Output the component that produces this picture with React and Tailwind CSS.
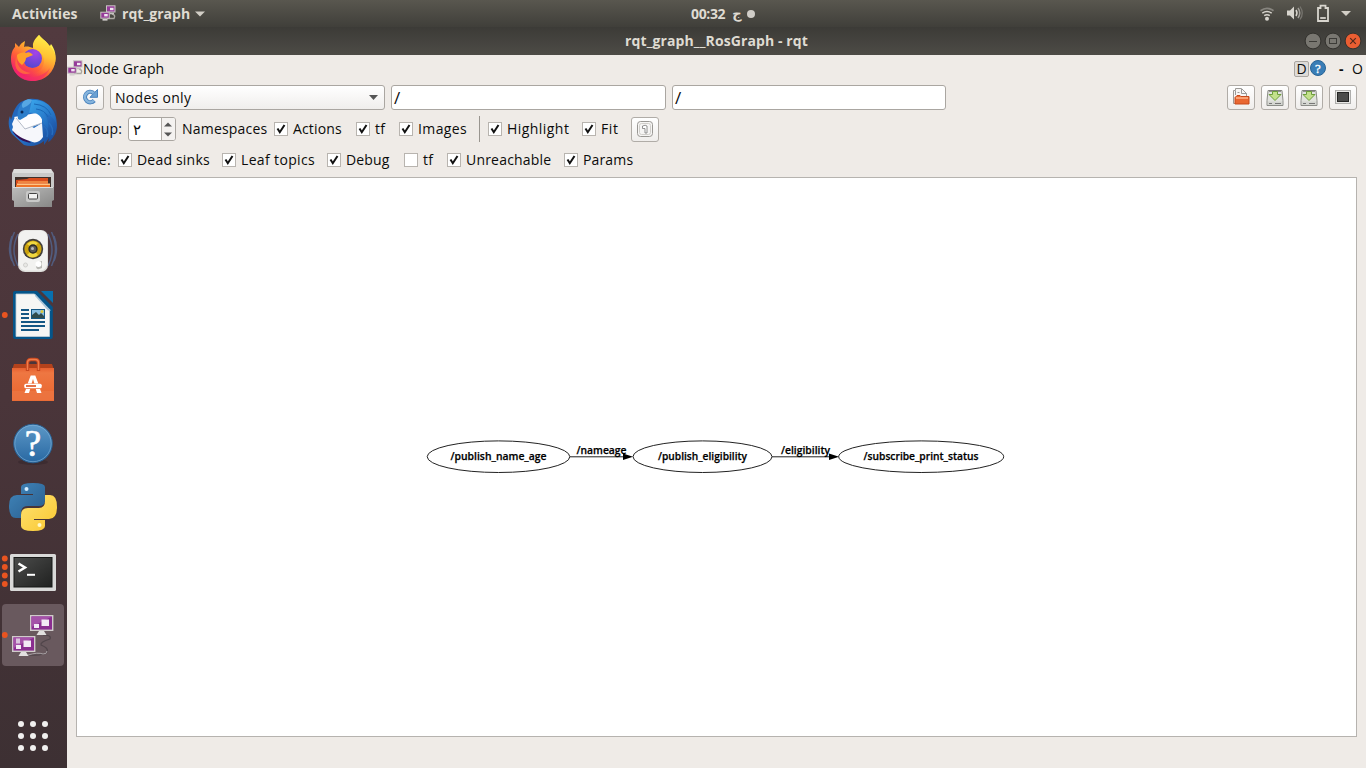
import React from "react";

const clean = "whitespace-nowrap leading-none";

function Monitor({ x, y, extra }) {
  return (
    <g transform={`translate(${x} ${y})`}>
      <path d="M9 16h5l2.500 4h-10z" fill="#e2e0df" />
      <rect x="0.7" y="0.7" width="22" height="14.600" fill="#8a2e90" stroke="#cfcbca" strokeWidth="1.400" />
      <path d="M1.500 1.500h20.400L1.500 12z" fill="#a452a8" />
      <rect x="4" y="9" width="5" height="4" fill="#f2e9f4" />
      <rect x="11.500" y="4.500" width="7.500" height="6.500" fill="#f2e9f4" />
      {extra && <rect x="4" y="2.500" width="4" height="5" fill="#d9c3dc" />}
    </g>
  );
}

function TinyRqt({ className }) {
  return (
    <svg width="16" height="16" viewBox="0 0 16 16" className={className}>
      <path d="M12 9q4 1 2 4.500H7" fill="none" stroke="#aaa69f" strokeWidth="1.400" />
      <rect x="6.500" y="0.8" width="8.500" height="6.200" fill="#963b99" stroke="#c9c5c4" />
      <rect x="10" y="2.800" width="3.500" height="2.400" fill="#f1e6f2" />
      <path d="M10 8.500h4" stroke="#c5c2c0" strokeWidth="1.600" />
      <rect x="0.8" y="7.200" width="8.500" height="6" fill="#963b99" stroke="#c9c5c4" />
      <rect x="4.200" y="9" width="3.500" height="2.400" fill="#f1e6f2" />
      <path d="M2.500 14.800h5" stroke="#d4d1cf" strokeWidth="1.600" />
    </svg>
  );
}

function TopBar() {
  return (
    <header className="grid h-[27px] shrink-0 grid-cols-[100px_591px_1fr_112px] items-center bg-linear-to-b from-[#59574f] to-[#403f3a] text-[14px] font-bold text-[#dfdbd2]">
      <span className={`${clean} pl-3 tracking-[0.05px]`}>Activities</span>
      <span className="flex items-center">
        <TinyRqt className="mt-[-2px]" />
        <span className={`${clean} ml-[6px] tracking-[0.05px]`}>rqt_graph</span>
        <svg width="10" height="6" className="ml-[5px]"><path d="M0 .5h10L5 5.5z" fill="#d2cec6" /></svg>
      </span>
      <span className="flex items-center">
        <span className={`${clean} tracking-[-0.35px]`}>00:32</span>
        <span className={`${clean} ml-[7px] text-[13px]`}>ج</span>
        <span className="ml-[5px] h-2 w-2 rounded-full bg-[#d0cdc8]" />
      </span>
      <span className="flex items-center">
        <svg width="106" height="22" viewBox="0 0 106 22" className="mt-[-1px]">
          <g fill="none" strokeLinecap="butt">
            <path d="M6.5 8.8q6.5-4.8 13 0" stroke="#87857f" strokeWidth="1.7" />
            <path d="M8.3 11.2q4.7-3.2 9.4 0" stroke="#d8d5ce" strokeWidth="1.5" />
            <path d="M10.2 13.7q2.8-1.8 5.6 0" stroke="#d8d5ce" strokeWidth="1.5" />
            <circle cx="13" cy="16.8" r="2" fill="#d8d5ce" />
            <path d="M33 8.500h3l4-4v13l-4-4h-3z" fill="#d8d5ce" />
            <path d="M42 8q2 3 0 6" stroke="#d8d5ce" strokeWidth="1.5" />
            <path d="M44 6q3.5 5 0 10" stroke="#a19e98" strokeWidth="1.5" />
            <path d="M46 4.5q4.5 6.500 0 13" stroke="#77756f" strokeWidth="1.3" />
            <path d="M64 6h2.500v-2.300h5v2.300h2.500v13h-10z" stroke="#d8d5ce" strokeWidth="1.8" />
            <path d="M66.200 16h5.600" stroke="#d8d5ce" strokeWidth="1.800" />
          </g>
          <path d="M87 9h10l-5 5z" fill="#d2cec6" />
        </svg>
      </span>
    </header>
  );
}

function DockItem({ children, dots = 0, active }) {
  return (
    <div className="h-16 w-[67px] shrink-0">
      <svg width="67" height="64" viewBox="0 0 67 64">
        {active && <rect x="2" y="1" width="62" height="62" rx="4" fill="#69595e" />}
        {dots === 1 && <circle cx="4.800" cy="32" r="2.900" fill="#e95420" />}
        {dots === 4 && [19.500, 28, 36.500, 45].map((y) => <circle key={y} cx="4.800" cy={y} r="2.900" fill="#e95420" />)}
        {children}
      </svg>
    </div>
  );
}

function Firefox() {
  return (
    <DockItem>
      <defs>
        <linearGradient id="ff" x1="0.8" y1="0.1" x2="0.25" y2="0.95">
          <stop offset="0.1" stopColor="#fff44f" /><stop offset="0.35" stopColor="#ffac2c" />
          <stop offset="0.65" stopColor="#ff5c3a" /><stop offset="1" stopColor="#ee1379" />
        </linearGradient>
        <linearGradient id="fy" x1="0.6" y1="0" x2="0.4" y2="1">
          <stop offset="0" stopColor="#fff04a" /><stop offset="0.5" stopColor="#ffc233" /><stop offset="1" stopColor="#ff7139" stopOpacity="0" />
        </linearGradient>
        <radialGradient id="ffg" cx="0.65" cy="0.2" r="0.8">
          <stop offset="0" stopColor="#a543e8" /><stop offset="1" stopColor="#5548cf" />
        </radialGradient>
      </defs>
      <path d="M39 8c2 3 6 5 9 9l1 4 2-4c3 4 5 9 4.500 15C55 45 45 54 33 54S11 45 11 32c0-6 2-10 4-12l0-4 4 4c1-3 4-5 6-6l-1 6c3-1 6 0 9 1 0-5 3-9 6-13z" fill="url(#ff)" />
      <path d="M39 8c-6 5-8 11-4 15 8 3 11 9 8 16-3 7-10 8-15 6 7 5 16 5 22-1 8-8 7-18 0-25C45 13 41 11 39 8z" fill="url(#fy)" />
      <circle cx="32.500" cy="31.500" r="9.500" fill="url(#ffg)" />
      <path d="M17 28c2-2 6-3 9-2 3-2 6 1 7 2-2 1-5 2-7 3 0 3-2 5-4 7-4-3-5-6-5-10z" fill="#ffa129" />
      <path d="M17 28c-2 9 4 17 14 18-13 4-19-6-14-18z" fill="#ff7139" opacity=".8" />
      <path d="M12 37c4 15 28 18 38 4-4 9-10 13-18 13-11 0-18-7-20-17z" fill="#f42f68" opacity=".6" />
    </DockItem>
  );
}

function Thunderbird() {
  return (
    <DockItem>
      <defs>
        <linearGradient id="tb" x1="0" y1="0" x2="1" y2="1"><stop stopColor="#1f5cb0" /><stop offset=".5" stopColor="#2878ce" /><stop offset="1" stopColor="#17418d" /></linearGradient>
        <linearGradient id="tw" x1="0" y1="0" x2="1" y2="1"><stop stopColor="#3aa6ec" /><stop offset="1" stopColor="#1c5db3" /></linearGradient>
      </defs>
      <path d="M29 8C45 6 57 18 57 34c0 7-3 12-7 16l-2 1 1-4-5 7 0-4c-6 5-13 6-20 4L12 43C8 37 8 29 10 25l1 4C13 20 17 12 23 10z" fill="url(#tb)" />
      <path d="M13 41l3 4c4 4 9 6 15 7-4-5-11-10-18-14z" fill="#341052" />
      <path d="M15 26l19 11 8-5 1 14c-3 5-8 7-13 4-7-2-13-5-18-11l1-3-1-3z" fill="#f6f7fb" />
      <path d="M14 26l28-5 0 11-17 6z" fill="#fdfdff" />
      <path d="M16 27l9 11 17-6" fill="none" stroke="#b4bbc8" strokeWidth="1" />
      <path d="M18 28c-2-10 3-18 11-20 7 1 6 4 4 8-1 3-4 5-6 9l-7 4z" fill="#2d7ecb" />
      <path d="M24 10c3-2 6-2 8-1-1 4-5 6-9 8-2-2-1-5 1-7z" fill="#69b9ed" opacity=".7" />
      <circle cx="22" cy="21" r="1.500" fill="#0b2856" />
      <path d="M32 9c14-1 24 9 24 23-3-6-7-9-12-10 3 4 5 10 4 16l-5-6c-1-6-5-11-14-10z" fill="url(#tw)" />
      <path d="M34 13q13 1 17 11M36 18q9 1 12 8" fill="none" stroke="#1967b6" strokeWidth="1" />
      <path d="M44 35q5 4 3 11M49 32q5 5 3 12" fill="none" stroke="#276dbe" strokeWidth="1.500" />
    </DockItem>
  );
}

function Files() {
  return (
    <DockItem>
      <defs><linearGradient id="fi" x1="0" y1="0" x2="1" y2="1"><stop stopColor="#bdbdbc" /><stop offset="1" stopColor="#878786" /></linearGradient></defs>
      <g transform="translate(0 4)">
        <path d="M14 10h37l3 4v27H12V14z" fill="#c9c9c8" />
        <path d="M14 10h37l2 4H13z" fill="#dededd" />
        <rect x="15" y="18" width="36" height="12" fill="#3e302b" />
        <path d="M16 21l11-1 2-1h19v9H16z" fill="#d84d1e" />
        <path d="M18 22h30v2H18z" fill="#ef8440" />
        <path d="M17 24.500h33v3H17z" fill="#ffc481" />
        <path d="M16 26h34v3H16z" fill="#ef7428" />
        <path d="M12 28h42v13l-2 1v6H14v-6l-2-1z" fill="url(#fi)" />
        <path d="M13 28.500h40" stroke="#ddd" />
        <rect x="26" y="32" width="14" height="11" rx="2" fill="#c9c9c8" />
        <rect x="28.500" y="34.500" width="9" height="5.500" rx="1" fill="#f2f2f1" stroke="#444" />
      </g>
    </DockItem>
  );
}

function Rhythmbox() {
  return (
    <DockItem>
      <g fill="none" stroke="#52658f" strokeWidth="1.500" opacity=".8">
        <path d="M18 15q-8 16 0 32M14.500 13q-8 17 0 34M12 17q-5 13 0 25M48 15q8 16 0 32M51.500 13q8 17 0 34M54 17q5 13 0 25" />
      </g>
      <rect x="18" y="11" width="30" height="42" rx="7" fill="#dededb" />
      <rect x="19" y="11.500" width="28" height="40" rx="6.500" fill="#f2f2f0" />
      <circle cx="33" cy="30" r="10.200" fill="#423f3b" />
      <circle cx="33" cy="30" r="8.600" fill="#cba20d" />
      <path d="M27 25q5-5 11-1l-5 5zM27 36q5 5 11 0l-5-6z" fill="#f0d740" />
      <circle cx="33" cy="30" r="4" fill="#5b5a57" stroke="#282724" strokeWidth="1.300" />
      <circle cx="32.500" cy="29.500" r="1.500" fill="#bbb" />
      <path d="M36 43l6-1v7q-6 3-6-2z" fill="#b9b9b5" /><circle cx="38.500" cy="45" r="3" fill="#fff" />
      <circle cx="25.500" cy="46" r="2" fill="#e8e8e5" stroke="#d0d0cd" />
    </DockItem>
  );
}

function Writer() {
  return (
    <DockItem dots={1}>
      <path d="M15 8h22l15.800 16v30q0 2-2 2H15q-2 0-2-2V10q0-2 2-2z" fill="#04558a" />
      <path d="M16 11h18.500L49.500 27v26.500H16z" fill="#f6f6f4" stroke="#c3ced5" strokeWidth=".8" />
      <path d="M35 11v2l13 14.500h3z" fill="#a8c4d8" />
      <path d="M41 8h12v12z" fill="#0870ae" />
      <g fill="#145784"><path d="M21 26h8v2h-8zM21 30h8v2h-8zM21 34h8v2h-8zM21 38h24v2H21zM21 42h24v2H21zM21 46h18v2H21z" /></g>
      <rect x="31.500" y="26.500" width="13" height="9" fill="#88bee2" stroke="#145784" />
      <path d="M32 35v-3l4-3 3 3 2-2 3 3v2z" fill="#304b4c" /><circle cx="42" cy="28.500" r="1.500" fill="#dec839" />
    </DockItem>
  );
}

function Software() {
  return (
    <DockItem>
      <defs><linearGradient id="sw" x1="0" y1="0" x2="0" y2="1"><stop stopColor="#e76131" /><stop offset=".15" stopColor="#ee7742" /><stop offset="1" stopColor="#e9652e" /></linearGradient></defs>
      <path d="M14 17h38l2 6H12z" fill="#b3421c" />
      <path d="M12 21h42v33H12z" fill="url(#sw)" />
      <path d="M12 44h42v9.500H12z" fill="#ed7745" opacity=".7" />
      <path d="M27.500 24v-8q0-3.500 3.500-3.500h4q3.500 0 3.500 3.500v8" fill="none" stroke="#c7471e" strokeWidth="3.400" />
      <path d="M27.500 23v-7q0-3.500 3.500-3.500h4q3.500 0 3.500 3.500v7" fill="none" stroke="#ee7d4c" strokeWidth="1.400" />
      <path d="M30.700 28.500h4.600l3 8H34.400L33 32l-1.400 4.500h-3.900zM26 42h4.200l-1.200 4h-4.500zM35.800 42H40l1.500 4H37z" fill="#fff" />
      <rect x="24.300" y="36.700" width="17.400" height="4.600" rx="1.500" fill="#fff" /><path d="M26 39h10" stroke="#df5928" strokeWidth="1.700" />
    </DockItem>
  );
}

function Help() {
  return (
    <DockItem>
      <defs><linearGradient id="he" x1="0" y1="0" x2="0" y2="1"><stop stopColor="#5d98c7" /><stop offset="1" stopColor="#2868a2" /></linearGradient></defs>
      <ellipse cx="33" cy="51" rx="15" ry="3" fill="#2e2025" opacity=".4" />
      <circle cx="33" cy="32.500" r="19.300" fill="url(#he)" stroke="#285f91" />
      <circle cx="33" cy="32.500" r="18.200" fill="none" stroke="#83b4d8" opacity=".6" />
      <text x="33" y="45" textAnchor="middle" fontSize="37" fill="#fff" stroke="#fff" strokeWidth=".7" fontFamily="Liberation Serif, serif">?</text>
    </DockItem>
  );
}

function Python() {
  return (
    <DockItem>
      <defs><linearGradient id="pb" x1="0" y1="0" x2="1" y2="1"><stop stopColor="#4288bd" /><stop offset="1" stopColor="#285b8b" /></linearGradient><linearGradient id="py" x1="0" y1="0" x2="1" y2="1"><stop stopColor="#ffe273" /><stop offset="1" stopColor="#f9c72f" /></linearGradient></defs>
      <path d="M21 12q0-4 12-4t12 4v13q0 6-6 6H28q-7 0-7 7v5h-5q-7 0-7-12 0-11 8-11h16v-1H21z" fill="url(#pb)" />
      <path d="M45 20h5q7 0 7 12 0 12-8 12H34v1h11v6q0 5-12 5t-12-5V40q0-7 7-7h11q6 0 6-7z" fill="url(#py)" />
      <circle cx="26.500" cy="14" r="2" fill="#d6edff" /><circle cx="39.500" cy="50" r="2" fill="#fff8c7" />
    </DockItem>
  );
}

function TerminalIcon() {
  return (
    <DockItem dots={4}>
      <defs><linearGradient id="te" x1="0" y1="0" x2="1" y2="1"><stop stopColor="#4b4c4b" /><stop offset="1" stopColor="#202120" /></linearGradient></defs>
      <rect x="10" y="15" width="46" height="37" rx="1.500" fill="#d9d9d8" />
      <rect x="14" y="18.500" width="38" height="29.500" fill="url(#te)" stroke="#171817" />
      <path d="M18.500 24.500l6.500 4-6.500 4" fill="none" stroke="#fff" strokeWidth="2.500" /><path d="M27 35.800h8" stroke="#fff" strokeWidth="2" />
    </DockItem>
  );
}

function Dock() {
  return (
    <nav className="flex w-[67px] shrink-0 flex-col bg-linear-to-b from-[#523a3f] via-[#4a353a] to-[#3d3033]">
      <Firefox /><Thunderbird /><Files /><Rhythmbox /><Writer /><Software /><Help /><Python /><TerminalIcon />
      <DockItem dots={1} active>
        <path d="M43 32q9 0 7 4-10 3-9 6 8 3 6 7-3 4-19 3" fill="none" stroke="#50454a" strokeWidth="1.200" />
        <path d="M28 52q10-3 15-1 4 0 4-3" fill="none" stroke="#a9a2a5" strokeWidth="1" />
        <Monitor x={30} y={12} /><Monitor x={12} y={33} extra />
      </DockItem>
      <div className="mt-[54px] grid grid-cols-3 gap-[6px] self-start pl-[18px]">
        {Array.from({ length: 9 }, (_, i) => <span key={i} className="h-[6px] w-[6px] rounded-full bg-[#f1f0ef]" />)}
      </div>
    </nav>
  );
}

function TitleBar() {
  return (
    <div className="grid h-7 shrink-0 grid-cols-[1fr_190px_1fr] items-center bg-linear-to-b from-[#3c3b37] to-[#4d4b46] text-[#dfdbd2]">
      <span />
      <span className={`${clean} text-center text-[14px] font-bold tracking-[0.1px]`}>rqt_graph__RosGraph - rqt</span>
      <svg width="60" height="20" viewBox="0 0 60 20" className="mr-[2px] justify-self-end">
        <circle cx="9" cy="10" r="7.900" fill="#797771" stroke="#32312d" /><path d="M5 10.500h8" stroke="#3c3b37" />
        <circle cx="29" cy="10" r="7.900" fill="#797771" stroke="#32312d" /><rect x="25.500" y="7.500" width="7" height="5" fill="none" stroke="#3c3b37" />
        <circle cx="49" cy="10" r="7.900" fill="#ec5e32" stroke="#32312d" /><path d="M46.200 7.200l5.600 5.600m0-5.600l-5.600 5.600" stroke="#53291c" strokeWidth="1.200" />
      </svg>
    </div>
  );
}

function ToolButton({ children }) {
  return <button className="flex h-[25px] w-7 items-center justify-center rounded-[3px] border border-[#b0aca7] bg-linear-to-b from-white to-[#f0eeec]">{children}</button>;
}

function SaveIcon() {
  return (
    <svg width="18" height="18" viewBox="0 0 18 18">
      <path d="M2 1.500h14l1 10v5H1v-5z" fill="#e2e3df" stroke="#8b8d88" />
      <path d="M3 2h12" stroke="#777974" strokeWidth="1.500" />
      <path d="M6.500 2.500h5v3H15l-6 6-6-6h3.500z" fill="#c3e08b" stroke="#6c9d3a" />
      <path d="M2 12.500h14v3.500H2z" fill="#d4d6d1" /><path d="M3 14.500h3M9 14.500h6" stroke="#777" />
    </svg>
  );
}

function Check({ label, on = true, track = "tracking-[0.15px]" }) {
  return (
    <label className="flex items-center">
      <span className="flex h-[14px] w-[14px] items-center justify-center border border-[#b8b4af] bg-white">
        {on && <svg width="12" height="12" viewBox="0 0 12 12"><path d="M2.500 5.500l2.300 3.700L9.500 2" fill="none" stroke="#111" strokeWidth="2" /></svg>}
      </span>
      <span className={`${clean} ml-[5px] ${track}`}>{label}</span>
    </label>
  );
}

function Toolbars() {
  return (
    <div className="flex h-[122px] shrink-0 flex-col text-[14px] text-[#0b0b0b]">
      <div className="flex h-[27px] items-center">
        <TinyRqt className="mt-[-2px]" />
        <span className={`${clean} tracking-[0.15px]`}>Node Graph</span>
        <span className="ml-auto flex h-4 w-[15px] items-center justify-center rounded-[2px] border border-[#aaa6a1] bg-[#dedbd8] leading-none">D</span>
        <svg width="17" height="17" viewBox="0 0 17 17"><circle cx="9" cy="8" r="7.500" fill="#397db6" stroke="#286395" /><text x="9" y="12.500" textAnchor="middle" fill="white" fontSize="13" stroke="#fff" strokeWidth=".3" fontFamily="Liberation Serif, serif">?</text></svg>
        <span className="ml-[13px] w-[13px] font-bold leading-none">-</span>
        <span className="w-[14px] leading-none">O</span>
      </div>
      <div className="flex h-[31px] items-center gap-[6px] pr-[9px] pl-[9px]">
        <ToolButton>
          <svg width="18" height="18" viewBox="0 0 18 18" className="mt-[-2px]"><path d="M13.200 12.500A5.200 5.200 0 1 1 12.500 5" fill="none" stroke="#4a83bd" strokeWidth="4.200" /><path d="M16.500 1.500v7.800H9z" fill="#6ba2d4" stroke="#4a83bd" /><path d="M12.800 12.700A5.200 5.200 0 1 1 12.700 5.200" fill="none" stroke="#85b4dd" strokeWidth="2.400" /></svg>
        </ToolButton>
        <div className="flex h-[25px] w-[275px] items-center justify-between rounded-[3px] border border-[#aaa6a1] bg-linear-to-b from-white to-[#f0eeec] pr-[6px] pl-1">
          <span className={`${clean} tracking-[0.3px]`}>Nodes only</span><svg width="9" height="5"><path d="M0 0h9L4.500 5z" fill="#555" /></svg>
        </div>
        <div className="flex h-[25px] w-[275px] items-center rounded-[3px] border border-[#aaa6a1] bg-white pl-[2px] text-[17px] leading-none">/</div>
        <div className="flex h-[25px] w-[274px] items-center rounded-[3px] border border-[#aaa6a1] bg-white pl-[2px] text-[17px] leading-none">/</div>
        <div className="ml-auto flex gap-[6px]">
          <ToolButton><svg width="18" height="18" viewBox="0 0 18 18" className="mt-[-1px]"><path d="M1.500 15.500V2.500h2v-2h6l5 5v9z" fill="#f7f6f5" stroke="#9c9a97" /><path d="M3.500 3v4M9.500 1v4.500h5M5.500 4.500h2" fill="none" stroke="#999" /><path d="M3 16V9.500l2-2h3l1 1h8V16z" fill="#e96731" stroke="#c64a1c" /><path d="M4 10h12" stroke="#ffb48b" strokeWidth="1.500" /></svg></ToolButton>
          <ToolButton><SaveIcon /></ToolButton><ToolButton><SaveIcon /></ToolButton>
          <ToolButton><svg width="18" height="16" viewBox="0 0 18 16" className="mt-[-1px]"><rect x="1.500" y="1.500" width="15" height="13" fill="#e7e7e5" stroke="#aeaeac" /><rect x="3.500" y="3.500" width="11" height="9" fill="#4b4c4b" stroke="#252625" /></svg></ToolButton>
        </div>
      </div>
      <div className="grid h-8 grid-cols-[52px_54px_92px_82px_43px_80px_9px_94px_49px_28px] items-center pl-[9px]">
        <span className={`${clean} tracking-[0.15px]`}>Group:</span>
        <div className="flex h-6 w-12 overflow-hidden rounded-[3px] border border-[#aaa6a1] bg-white">
          <span className="flex w-8 items-center pl-1 text-[15px] leading-none">۲</span>
          <svg width="14" height="22" viewBox="0 0 14 22"><rect width="14" height="22" fill="#f4f2f0" /><path d="M.5 0v22" stroke="#b0aca7" /><path d="M3 8.500h8L7 4.500zM3 14.500h8L7 18.500z" fill="#555" /></svg>
        </div>
        <span className={`${clean} tracking-[0.2px]`}>Namespaces</span>
        <Check label="Actions" /><Check label="tf" /><Check label="Images" track="tracking-[0.4px]" />
        <span className="h-[26px] border-l border-[#99958f]" />
        <Check label="Highlight" track="tracking-[0.45px]" /><Check label="Fit" track="tracking-[0.6px]" />
        <ToolButton><svg width="16" height="16" viewBox="0 0 16 16"><rect x="0.500" y="0.500" width="15" height="15" rx="3" fill="#f6f5f4" stroke="#999793" /><rect x="2.500" y="2.500" width="11" height="11" rx="2" fill="none" stroke="#d0ceca" /><path d="M5.500 5q3-1.500 4.500 0V12H8V7.500H5.500z" fill="#fff" stroke="#777" strokeWidth=".8" /></svg></ToolButton>
      </div>
      <div className="grid h-[30px] grid-cols-[42px_104px_105px_77px_43px_117px_90px] items-center pl-[9px]">
        <span className={`${clean} tracking-[0.15px]`}>Hide:</span>
        <Check label="Dead sinks" track="tracking-[0.2px]" /><Check label="Leaf topics" track="tracking-[0.35px]" /><Check label="Debug" /><Check label="tf" on={false} /><Check label="Unreachable" track="tracking-[0.2px]" /><Check label="Params" />
      </div>
    </div>
  );
}

function Graph() {
  return (
    <main className="mx-[9px] h-[560px] border border-[#b6b3af] bg-white">
      <svg width="1279" height="558" viewBox="77 178 1279 558">
        <g fill="none" stroke="#222" strokeWidth="1">
          <ellipse cx="498.500" cy="456.700" rx="71.300" ry="15.800" /><ellipse cx="702.500" cy="456.700" rx="69.500" ry="15.800" /><ellipse cx="921.200" cy="456.700" rx="82.500" ry="15.800" />
          <path d="M570 456.800h54M772 456.800h58" />
        </g>
        <path d="M623 453.500l10 3.300-10 3.300zM829 453.500l10 3.300-10 3.300z" />
        <g fill="#000" fontFamily="Open Sans, sans-serif" fontSize="10.500" fontWeight="600" stroke="#000" strokeWidth=".25">
          <text x="450.500" y="460" textLength="96" lengthAdjust="spacingAndGlyphs">/publish_name_age</text>
          <text x="658" y="460" textLength="89" lengthAdjust="spacingAndGlyphs">/publish_eligibility</text>
          <text x="863.500" y="460" textLength="115" lengthAdjust="spacingAndGlyphs">/subscribe_print_status</text>
          <text x="576.500" y="453.500" textLength="50" lengthAdjust="spacingAndGlyphs">/nameage</text>
          <text x="781" y="453.500" textLength="49" lengthAdjust="spacingAndGlyphs">/eligibility</text>
        </g>
      </svg>
    </main>
  );
}

export default function App() {
  return (
    <div className="flex h-[768px] w-[1366px] flex-col overflow-hidden bg-[#efebe7] font-['Open_Sans','Noto_Sans','DejaVu_Sans',sans-serif]">
      <TopBar />
      <div className="flex min-h-0 flex-1">
        <Dock />
        <section className="flex min-w-0 flex-1 flex-col"><TitleBar /><Toolbars /><Graph /></section>
      </div>
    </div>
  );
}
